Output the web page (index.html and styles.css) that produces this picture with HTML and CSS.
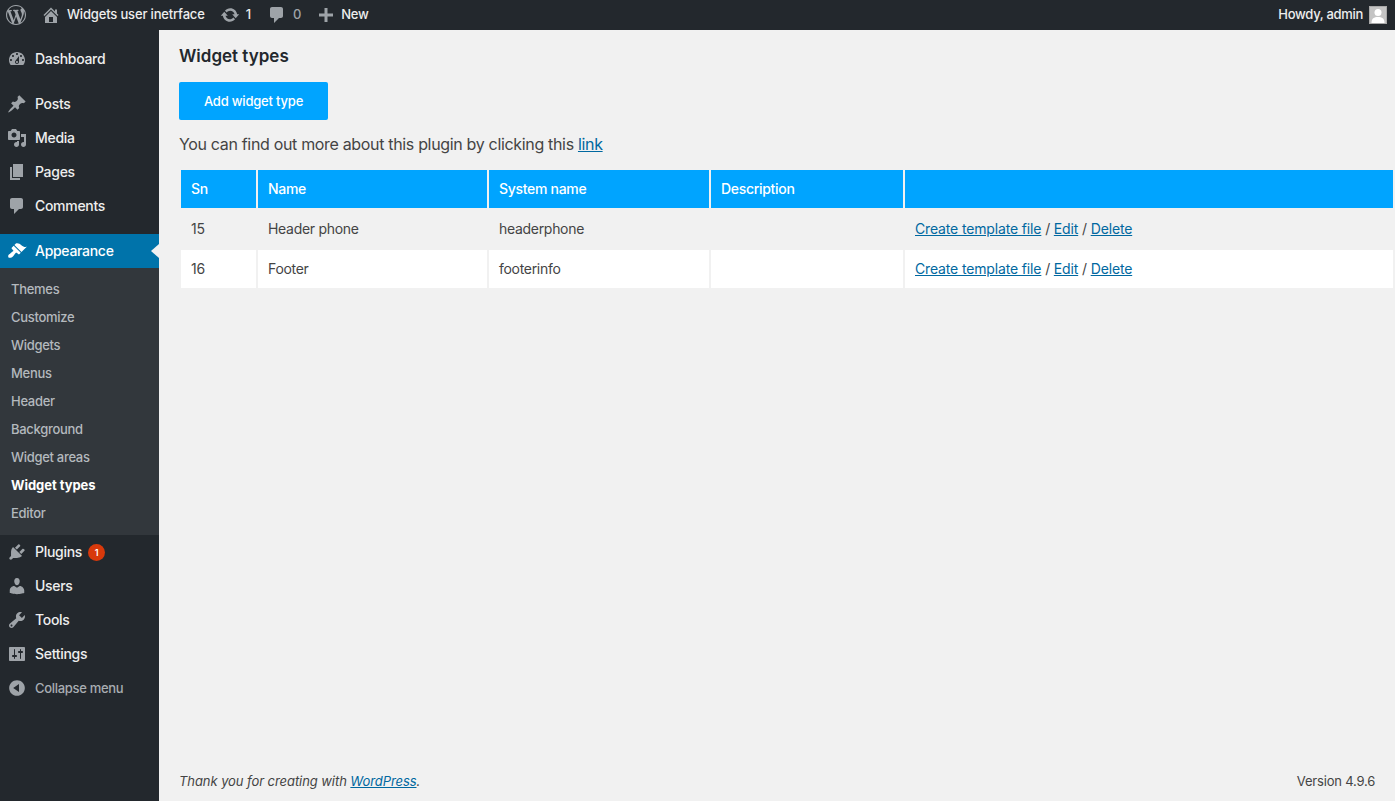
FILE: index.html
```html
<!DOCTYPE html>
<html lang="en">
<head>
    <meta charset="UTF-8">
    <meta name="viewport" content="width=device-width, initial-scale=1.0">
    <title>Widget types</title>
    <link rel="stylesheet" href="styles.css">
</head>
<body>
    <!-- Top bar -->
    <header class="topbar">
        <svg class="wp-logo" viewBox="0 0 20 20"><path d="M20 10c0-5.51-4.49-10-10-10C4.48 0 0 4.49 0 10c0 5.52 4.48 10 10 10 5.51 0 10-4.48 10-10zM7.78 15.37L4.37 6.22c.55-.02 1.17-.08 1.17-.08.5-.06.44-1.13-.06-1.11 0 0-1.45.11-2.37.11-.18 0-.37 0-.58-.01C4.12 2.69 6.87 1.11 10 1.11c2.33 0 4.45.87 6.05 2.34-.68-.11-1.65.39-1.65 1.58 0 .74.45 1.36.9 2.1.35.61.55 1.36.55 2.46 0 1.49-1.4 5-1.4 5l-3.03-8.37c.54-.02.82-.17.82-.17.5-.05.44-1.25-.06-1.22 0 0-1.44.12-2.38.12-.87 0-2.33-.12-2.33-.12-.5-.03-.56 1.2-.06 1.22l.92.08 1.26 3.41zM17.41 10c.24-.64.74-1.87.43-4.25.7 1.29 1.05 2.71 1.05 4.25 0 3.29-1.73 6.24-4.4 7.78.97-2.59 1.94-5.2 2.92-7.78zM6.1 18.09C3.12 16.65 1.11 13.53 1.11 10c0-1.3.23-2.48.72-3.59C3.25 10.3 4.67 14.2 6.1 18.09zm4.03-6.63l2.58 6.98c-.86.29-1.76.45-2.71.45-.79 0-1.57-.11-2.29-.33.81-2.38 1.62-4.74 2.42-7.1z"/></svg>
        <a class="bar-item bar-site">
            <svg class="bar-icon" viewBox="0 0 20 20"><path d="M16 8.5l1.53 1.53-1.06 1.06L10 4.62l-6.47 6.47-1.06-1.06L10 2.5l4 4v-2h2v4zm-6-2.46l6 5.99V18H4v-5.97zM12 17v-5H8v5h4z"/></svg>
            <span>Widgets user inetrface</span>
        </a>
        <a class="bar-item bar-updates">
            <svg class="bar-icon" viewBox="0 0 20 20"><path d="M10.2 3.28c3.53 0 6.43 2.61 6.92 6h2.08l-3.5 4-3.5-4h2.32c-.45-1.97-2.21-3.45-4.32-3.45-1.45 0-2.73.71-3.54 1.78L4.95 5.66C6.23 4.2 8.11 3.28 10.2 3.28zm-.4 13.44c-3.52 0-6.43-2.61-6.92-6H.8l3.5-4c1.17 1.33 2.33 2.67 3.5 4H5.48c.45 1.97 2.21 3.45 4.32 3.45 1.45 0 2.73-.71 3.54-1.78l1.71 1.95c-1.28 1.46-3.15 2.38-5.25 2.38z"/></svg>
            <span>1</span>
        </a>
        <a class="bar-item bar-comments">
            <svg class="bar-icon" viewBox="0 0 20 20"><path d="M5 2h9c1.1 0 2 .9 2 2v7c0 1.1-.9 2-2 2h-2l-5 5v-5H5c-1.1 0-2-.9-2-2V4c0-1.1.9-2 2-2z"/></svg>
            <span class="muted">0</span>
        </a>
        <a class="bar-item bar-new">
            <svg class="bar-icon" viewBox="0 0 20 20"><path d="M17 11.5h-5.5V17h-3v-5.500H3v-3h5.500V3h3v5.500H17z"/></svg>
            <span>New</span>
        </a>
        <a class="bar-item bar-user">
            <span>Howdy, admin</span>
            <svg class="avatar" viewBox="0 0 18 18"><rect width="18" height="18" fill="#a8a8a8"/><rect x="1" y="1" width="16" height="16" fill="#c4c4c4"/><circle cx="9" cy="6.500" r="3.500" fill="#fff"/><path d="M2.500 17c0-4.500 2.500-6 6.500-6s6.500 1.500 6.500 6z" fill="#fff"/></svg>
        </a>
    </header>

    <div class="wrap">
        <!-- Side menu -->
        <nav class="sidebar">
            <a class="menu-item first">
                <svg class="menu-icon" viewBox="0 0 20 20"><path d="M3.76 16h12.48c1.1-1.37 1.76-3.11 1.76-5 0-4.42-3.58-8-8-8s-8 3.58-8 8c0 1.89.66 3.630 1.76 5zM10 4c.55 0 1 .45 1 1s-.45 1-1 1-1-.45-1-1 .45-1 1-1zM6 6c.55 0 1 .45 1 1s-.45 1-1 1-1-.45-1-1 .45-1 1-1zm8 0c.55 0 1 .45 1 1s-.45 1-1 1-1-.45-1-1 .45-1 1-1zm-5.370 5.550L12 7v6c0 1.100-.9 2-2 2s-2-.9-2-2c0-.57.24-1.080.63-1.450zM4 10c.55 0 1 .45 1 1s-.45 1-1 1-1-.45-1-1 .45-1 1-1zm12 0c.55 0 1 .45 1 1s-.45 1-1 1-1-.45-1-1 .45-1 1-1zm-5 3c0-.55-.45-1-1-1s-1 .45-1 1 .45 1 1 1 1-.45 1-1z" fill-rule="evenodd"/></svg>
                Dashboard
            </a>
            <a class="menu-item group-start">
                <svg class="menu-icon" viewBox="0 0 20 20"><path d="M10.44 3.020l1.820-1.820 6.360 6.350-1.830 1.820c-1.050-.68-2.480-.57-3.410.36l-.75.75c-.92.93-1.040 2.350-.35 3.410l-1.830 1.820-2.410-2.410-2.800 2.790c-.42.42-3.380 2.710-3.800 2.290s1.860-3.390 2.280-3.810l2.790-2.790L4.100 9.360l1.830-1.820c1.050.69 2.480.57 3.400-.36l.75-.75c.93-.92 1.050-2.350.36-3.410z"/></svg>
                Posts
            </a>
            <a class="menu-item">
                <svg class="menu-icon" viewBox="0 0 20 20"><path d="M13 11V4c0-.55-.45-1-1-1h-1.670L9 1H5L3.670 3H2c-.55 0-1 .45-1 1v7c0 .55.45 1 1 1h10c.55 0 1-.45 1-1zM7 4.500c1.380 0 2.500 1.120 2.500 2.500S8.380 9.500 7 9.500 4.500 8.380 4.500 7 5.620 4.500 7 4.500zM14 6h5v10.500c0 1.380-1.120 2.500-2.500 2.500S14 17.880 14 16.500s1.120-2.500 2.500-2.500c.17 0 .34.020.5.050V9h-3V6zm-4 8.050V13h2v3.500c0 1.380-1.120 2.500-2.500 2.500S7 17.880 7 16.500 8.120 14 9.500 14c.17 0 .34.020.5.050z"/></svg>
                Media
            </a>
            <a class="menu-item">
                <svg class="menu-icon" viewBox="0 0 20 20"><path d="M6 15V2h10v13H6zm-1 1h8v2H3V5h2v11z"/></svg>
                Pages
            </a>
            <a class="menu-item">
                <svg class="menu-icon" viewBox="0 0 20 20"><path d="M5 2h9c1.100 0 2 .9 2 2v7c0 1.100-.9 2-2 2h-2l-5 5v-5H5c-1.100 0-2-.9-2-2V4c0-1.100.9-2 2-2z"/></svg>
                Comments
            </a>
            <a class="menu-item group-start active">
                <svg class="menu-icon" viewBox="0 0 20 20"><path d="M14.480 11.060L7.410 3.990l1.500-1.500c.5-.56 2.300-.47 3.510.32 1.210.8 1.430 1.280 2.910 2.100 1.180.64 2.450 1.260 4.450.85zm-.71.71L6.700 4.700 4.930 6.470c-.39.39-.39 1.020 0 1.410l1.060 1.060c.39.39.39 1.030 0 1.420-.6.6-1.430 1.110-2.210 1.690-.35.26-.7.53-1.010.84C1.430 13.230.78 15 1.500 16.500c1.500.72 3.270.07 4.610-1.270.31-.31.58-.66.84-1.010.58-.78 1.090-1.610 1.690-2.210.39-.39 1.030-.39 1.420 0l1.060 1.060c.39.39 1.020.39 1.410 0z"/></svg>
                Appearance
            </a>
            <div class="submenu">
                <a>Themes</a>
                <a>Customize</a>
                <a>Widgets</a>
                <a>Menus</a>
                <a>Header</a>
                <a>Background</a>
                <a>Widget areas</a>
                <a class="current">Widget types</a>
                <a>Editor</a>
            </div>
            <a class="menu-item">
                <svg class="menu-icon" viewBox="0 0 20 20"><path d="M13.110 4.360L9.870 7.600 8 5.730l3.240-3.240c.35-.34 1.050-.2 1.560.32.52.51.66 1.210.31 1.550zm-8 1.770l.91-1.120 9.010 9.010-1.190.84c-.71.71-2.630 1.160-3.820 1.160H6.140L4.900 17.260c-.59.59-1.540.59-2.120 0-.59-.58-.59-1.530 0-2.120l1.240-1.240v-3.880c0-1.130.4-3.190 1.090-3.890zm7.260 3.970l3.240-3.240c.34-.35 1.040-.21 1.550.31.52.51.66 1.210.31 1.550l-3.240 3.250z"/></svg>
                Plugins
                <span class="badge">1</span>
            </a>
            <a class="menu-item">
                <svg class="menu-icon" viewBox="0 0 20 20"><path d="M10 9.250c-2.270 0-2.730-3.440-2.730-3.440C7 4.020 7.820 2 9.970 2c2.160 0 2.980 2.020 2.710 3.810 0 0-.41 3.440-2.680 3.440zm0 2.570L12.720 10c2.390 0 4.520 2.330 4.520 4.530v2.490s-3.650 1.130-7.240 1.130c-3.650 0-7.240-1.130-7.240-1.130v-2.490c0-2.250 1.940-4.480 4.470-4.480z"/></svg>
                Users
            </a>
            <a class="menu-item">
                <svg class="menu-icon" viewBox="0 0 20 20"><path d="M16.680 9.770c-1.340 1.340-3.300 1.670-4.950.99l-5.410 6.520c-.99.99-2.590.99-3.580 0s-.99-2.590 0-3.570l6.520-5.420c-.68-1.650-.35-3.610.99-4.950 1.280-1.280 3.120-1.620 4.720-1.060l-2.890 2.890 2.820 2.820 2.860-2.870c.53 1.580.18 3.390-1.080 4.650zM3.810 16.210c.4.39 1.040.39 1.430 0 .4-.4.4-1.040 0-1.430-.39-.4-1.030-.4-1.430 0-.39.39-.39 1.030 0 1.430z"/></svg>
                Tools
            </a>
            <a class="menu-item">
                <svg class="menu-icon" viewBox="0 0 20 20"><path d="M18 16V4c0-.55-.45-1-1-1H3c-.55 0-1 .45-1 1v12c0 .55.45 1 1 1h14c.55 0 1-.45 1-1zM8 11h1c.55 0 1 .45 1 1s-.45 1-1 1H8v1.500c0 .28-.22.5-.5.5s-.5-.22-.5-.5V13H6c-.55 0-1-.45-1-1s.45-1 1-1h1V5.500c0-.28.22-.5.5-.5s.5.22.5.5V11zm5-2h-1c-.55 0-1-.45-1-1s.45-1 1-1h1V5.500c0-.28.22-.5.5-.5s.5.22.5.5V7h1c.55 0 1 .45 1 1s-.45 1-1 1h-1v5.500c0 .28-.22.5-.5.5s-.5-.22-.5-.5V9z"/></svg>
                Settings
            </a>
            <a class="menu-item collapse">
                <svg class="menu-icon" viewBox="0 0 20 20"><path d="M10 2.160c4.330 0 7.840 3.510 7.840 7.840s-3.510 7.840-7.840 7.840S2.160 14.330 2.160 10 5.710 2.160 10 2.160zm2 11.720V6.120L6.180 9.970z"/></svg>
                Collapse menu
            </a>
        </nav>

        <!-- Page content -->
        <main class="content">
            <h1>Widget types</h1>
            <a class="add-button">Add widget type</a>
            <p class="intro">You can find out more about this plugin by clicking this <a class="link">link</a></p>

            <table class="widget-table">
                <thead>
                    <tr>
                        <th class="col-sn">Sn</th>
                        <th class="col-name">Name</th>
                        <th class="col-system">System name</th>
                        <th class="col-desc">Description</th>
                        <th></th>
                    </tr>
                </thead>
                <tbody>
                    <tr>
                        <td>15</td>
                        <td>Header phone</td>
                        <td>headerphone</td>
                        <td></td>
                        <td class="actions"><a class="link">Create template file</a> / <a class="link">Edit</a> / <a class="link">Delete</a></td>
                    </tr>
                    <tr class="striped">
                        <td>16</td>
                        <td>Footer</td>
                        <td>footerinfo</td>
                        <td></td>
                        <td class="actions"><a class="link">Create template file</a> / <a class="link">Edit</a> / <a class="link">Delete</a></td>
                    </tr>
                </tbody>
            </table>

            <footer class="page-footer">
                <em class="thanks">Thank you for creating with <a class="link">WordPress</a>.</em>
                <span>Version 4.9.6</span>
            </footer>
        </main>
    </div>
</body>
</html>
```

FILE: styles.css
```css
* {
    box-sizing: border-box;
}
html, body {
    margin: 0;
    height: 100%;
}
body {
    display: flex;
    flex-direction: column;
    overflow: hidden;
    background-color: #f1f1f1;
    color: #444;
    font-family: Inter, "Noto Sans", sans-serif;
    font-size: 14px;
}

/* Top bar */
.topbar {
    display: flex;
    align-items: center;
    flex: none;
    height: 30px;
    padding: 0 8px 0 6px;
    background-color: #23282d;
    color: #eee;
    font-size: 13px;
    font-weight: 500;
    letter-spacing: -0.17px;
}
.wp-logo {
    width: 20px;
    height: 20px;
    fill: #9ea3a8;
}
.bar-item {
    display: flex;
    align-items: center;
}
.bar-item span {
    margin-bottom: 2px;
}
.bar-icon {
    width: 20px;
    height: 20px;
    fill: #9ea3a8;
}
.bar-site {
    margin-left: 15px;
    gap: 6px;
}
.bar-updates {
    margin-left: 15px;
    gap: 6px;
}
.bar-comments {
    margin-left: 16px;
    gap: 6px;
}
.bar-new {
    margin-left: 15px;
    gap: 5px;
}
.bar-user {
    margin-left: auto;
    gap: 6px;
    letter-spacing: -0.3px;
}
.muted {
    color: #9ea3a8;
}
.avatar {
    width: 18px;
    height: 18px;
}

.wrap {
    display: flex;
    flex: 1;
    min-height: 0;
}

/* Side menu */
.sidebar {
    flex: none;
    width: 159px;
    background-color: #23282d;
    color: #eee;
    font-weight: 500;
    letter-spacing: -0.3px;
}
.menu-item {
    position: relative;
    display: flex;
    align-items: center;
    gap: 8px;
    height: 34px;
    padding: 0 0 2px 7px;
}
.menu-icon {
    flex: none;
    width: 20px;
    height: 20px;
    margin-top: 2px;
    fill: #9ea3a8;
}
.first {
    margin-top: 12px;
}
.group-start {
    margin-top: 11px;
}
.active {
    background-color: #0073aa;
    color: #fff;
}
.active .menu-icon {
    fill: #fff;
}
.active::after {
    content: "";
    position: absolute;
    right: 0;
    top: 10px;
    border: 7px solid transparent;
    border-left-width: 0;
    border-right: 8px solid #f1f1f1;
}
.submenu {
    padding: 7px 0 8px;
    background-color: #32373c;
    color: #b4b9be;
    font-size: 13px;
}
.submenu a {
    display: flex;
    align-items: center;
    height: 28px;
    padding-left: 11px;
}
.submenu .current {
    color: #fff;
    font-weight: 700;
    letter-spacing: -0.05px;
}
.badge {
    display: flex;
    align-items: center;
    justify-content: center;
    width: 17px;
    height: 17px;
    margin: 2px 0 0 -2px;
    border-radius: 50%;
    background-color: #d8390b;
    color: #fff;
    font-size: 9px;
    font-weight: 600;
}
.collapse {
    padding-bottom: 0;
    color: #a8adb2;
    font-size: 13px;
}
.collapse .menu-icon {
    margin-top: 0;
}

/* Page content */
.content {
    display: flex;
    flex: 1;
    flex-direction: column;
    min-width: 0;
    padding-left: 20px;
}
h1 {
    margin: 16px 0 15px;
    color: #23282d;
    font-size: 17px;
    font-weight: 600;
    line-height: 21px;
}
.add-button {
    display: flex;
    align-items: center;
    justify-content: center;
    width: 149px;
    height: 38px;
    border-radius: 2px;
    background-color: #00a4ff;
    color: #fff;
    font-size: 13px;
    font-weight: 500;
    letter-spacing: -0.2px;
}
.intro {
    margin: 13px 0 0;
    font-size: 16px;
    line-height: 22px;
    letter-spacing: -0.33px;
}
.link {
    color: #0068a0;
    text-decoration: underline;
}

/* Table */
.widget-table {
    width: 100%;
    margin-top: 13px;
    border-spacing: 2px;
    table-layout: fixed;
    letter-spacing: -0.3px;
}
.widget-table th,
.widget-table td {
    height: 38px;
    padding: 0 10px 2px;
    text-align: left;
}
.widget-table th {
    background-color: #00a4ff;
    color: #fff;
    font-weight: 500;
}
.widget-table .actions {
    letter-spacing: -0.15px;
}
.striped td {
    background-color: #fff;
}
.col-sn {
    width: 75px;
}
.col-name {
    width: 229px;
}
.col-system {
    width: 220px;
}
.col-desc {
    width: 192px;
}

.page-footer {
    display: flex;
    justify-content: space-between;
    margin-top: auto;
    padding: 0 20px 10px 0;
    font-size: 13px;
    line-height: 20px;
    letter-spacing: -0.2px;
}
.thanks {
    letter-spacing: -0.07px;
}
```
